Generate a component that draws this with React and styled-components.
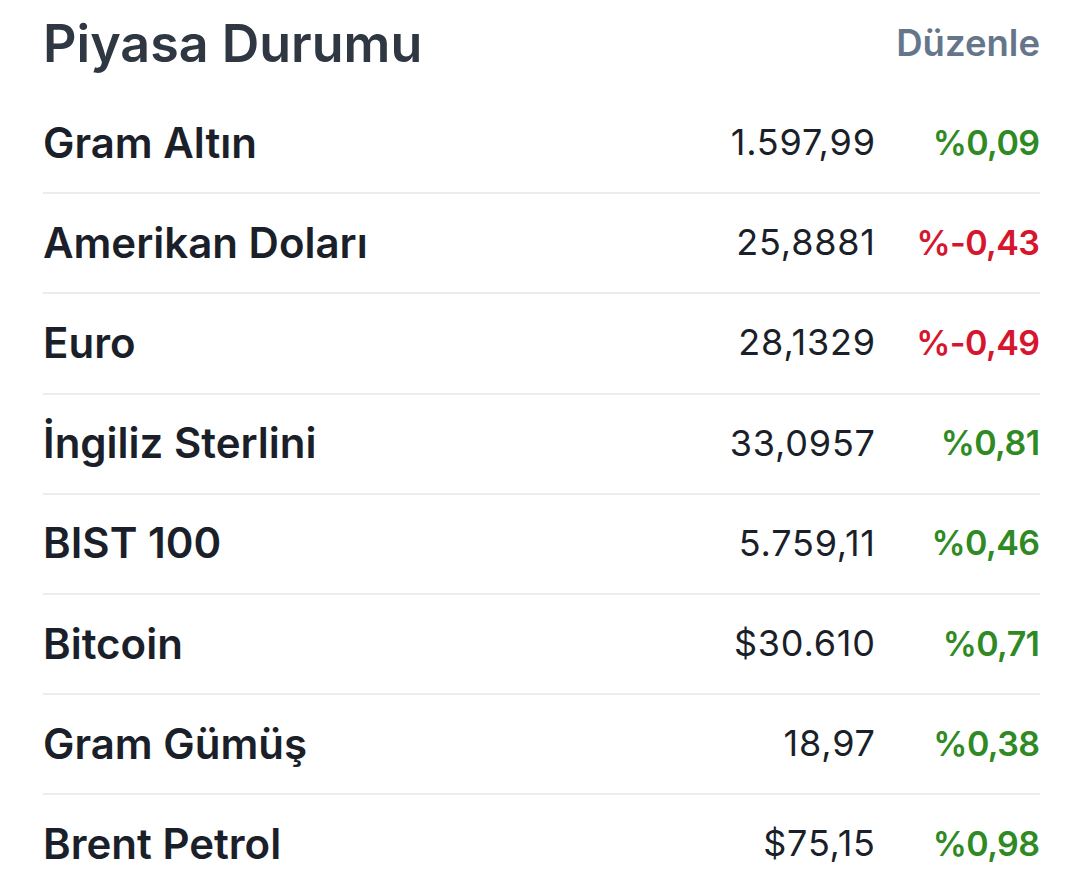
import React from "react";
import styled, { createGlobalStyle } from "styled-components";

const Global = createGlobalStyle`
  html, body { margin: 0; padding: 0; background: #ffffff; }
  body { font-family: Inter, "Noto Sans", sans-serif; -webkit-font-smoothing: antialiased; }
`;

const Page = styled.div`
  padding: 0 40px 0 43px;
`;

const Header = styled.div`
  display: flex;
  align-items: center;
  justify-content: space-between;
  box-sizing: border-box;
  height: 94px;
  padding-bottom: 8px;
`;

const Title = styled.h1`
  margin: 0;
  font-size: 52px;
  font-weight: 600;
  color: #2e3742;
`;

const EditLink = styled.a`
  font-size: 36.5px;
  font-weight: 600;
  color: #66768a;
  cursor: pointer;
`;

const List = styled.div`
  display: flex;
  flex-direction: column;
`;

const Row = styled.div`
  display: grid;
  grid-template-columns: 1fr auto 165px;
  align-items: center;
  height: 98.2px;
  padding-bottom: 1px;
  box-sizing: content-box;
  border-bottom: 2px solid ${(p) => (p.$last ? "transparent" : "#ececec")};
  margin-top: -1px;
`;

const Name = styled.div`
  font-size: 42px;
  font-weight: 600;
  color: #1b1f29;
`;

const Value = styled.div`
  font-size: 36px;
  font-weight: 400;
  letter-spacing: 0.8px;
  margin-right: -0.8px;
  color: #1b1f29;
  text-align: right;
`;

const Change = styled.div`
  font-size: 34px;
  font-weight: 600;
  letter-spacing: -0.6px;
  margin-right: 0.6px;
  text-align: right;
  color: ${(p) => (p.$down ? "#d6162e" : "#2f8a24")};
`;

const data = [
  ["Gram Altın", "1.597,99", "%0,09"],
  ["Amerikan Doları", "25,8881", "%-0,43"],
  ["Euro", "28,1329", "%-0,49"],
  ["İngiliz Sterlini", "33,0957", "%0,81"],
  ["BIST 100", "5.759,11", "%0,46"],
  ["Bitcoin", "$30.610", "%0,71"],
  ["Gram Gümüş", "18,97", "%0,38"],
  ["Brent Petrol", "$75,15", "%0,98"],
];

export default function App() {
  return (
    <>
      <Global />
      <Page>
        <Header>
          <Title>Piyasa Durumu</Title>
          <EditLink>Düzenle</EditLink>
        </Header>
        <List>
          {data.map(([n, v, c], i) => (
            <Row key={n} $last={i === data.length - 1}>
              <Name>{n}</Name>
              <Value>{v}</Value>
              <Change $down={c.includes("-")}>{c}</Change>
            </Row>
          ))}
        </List>
      </Page>
    </>
  );
}
